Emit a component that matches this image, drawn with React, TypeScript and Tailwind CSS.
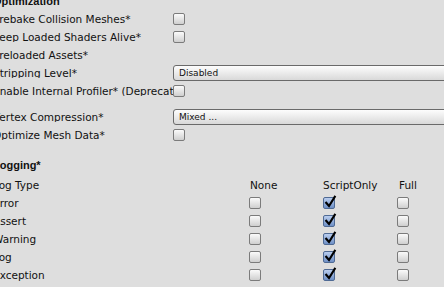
import React from "react";

function Check({ checked = false }: { checked?: boolean }) {
  if (checked) {
    return (
      <div className="relative w-[12px] h-[12px] shrink-0 rounded-[2px] border border-[#4f6a94] bg-gradient-to-b from-[#b9cdee] to-[#6f90c6]">
        <svg className="absolute left-[0px] top-[-3px]" width="13" height="14" viewBox="0 0 13 14">
          <path d="M2.2 7.8 L5 11 L10.8 1.8" fill="none" stroke="#000" strokeWidth="2.1" strokeLinecap="square" strokeLinejoin="miter" />
        </svg>
      </div>
    );
  }
  return (
    <div className="w-[12px] h-[12px] shrink-0 rounded-[2px] border border-[#7b7b7b] bg-gradient-to-b from-[#fbfbfb] to-[#cfcfcf]" />
  );
}

function Popup({ text }: { text: string }) {
  return (
    <div className="w-[300px] h-[16px] shrink-0 rounded-[3px] border border-[#6a6a6a] bg-gradient-to-b from-[#fdfdfd] to-[#d9d9d9] flex items-center pl-[5px] text-[9px] leading-none">
      {text}
    </div>
  );
}

function Row({ label, children }: { label: string; children?: React.ReactNode }) {
  return (
    <div className="flex items-center h-[18px]">
      <div className="w-[180px] shrink-0 overflow-hidden whitespace-nowrap">{label}</div>
      {children}
    </div>
  );
}

function LogRow({ label }: { label: string }) {
  return (
    <div className="flex items-center h-[18px]">
      <div className="w-[256px] shrink-0 whitespace-nowrap">{label}</div>
      <div className="w-[74px] shrink-0"><Check /></div>
      <div className="w-[74px] shrink-0"><Check checked /></div>
      <div className="w-[74px] shrink-0"><Check /></div>
    </div>
  );
}

export default function App() {
  return (
    <div className="w-[444px] h-[287px] overflow-hidden bg-[#dedede] text-[#111] text-[10.5px] leading-none font-['DejaVu_Sans',sans-serif]">
      <div className="ml-[-7px] mt-[-10px] flex flex-col">
        <div className="flex items-center h-[20px] pt-[2px] font-bold text-[11px] font-['Liberation_Sans',sans-serif]">Optimization</div>
        <Row label="Prebake Collision Meshes*"><Check /></Row>
        <Row label="Keep Loaded Shaders Alive*"><Check /></Row>
        <Row label="Preloaded Assets*" />
        <Row label="Stripping Level*"><Popup text="Disabled" /></Row>
        <Row label="Enable Internal Profiler* (Deprecated)"><Check /></Row>
        <div className="h-[8px]" />
        <Row label="Vertex Compression*"><Popup text="Mixed ..." /></Row>
        <Row label="Optimize Mesh Data*"><Check /></Row>
        <div className="h-[12px]" />
        <div className="flex items-center h-[18px] font-bold text-[11px] font-['Liberation_Sans',sans-serif]">Logging*</div>
        <div className="h-[2px]" />
        <div className="flex items-center h-[18px]">
          <div className="w-[256px] shrink-0">Log Type</div>
          <div className="w-[74px] shrink-0 pl-[1px]">None</div>
          <div className="w-[74px] shrink-0">ScriptOnly</div>
          <div className="w-[74px] shrink-0 pl-[2px]">Full</div>
        </div>
        <LogRow label="Error" />
        <LogRow label="Assert" />
        <LogRow label="Warning" />
        <LogRow label="Log" />
        <LogRow label="Exception" />
      </div>
    </div>
  );
}
